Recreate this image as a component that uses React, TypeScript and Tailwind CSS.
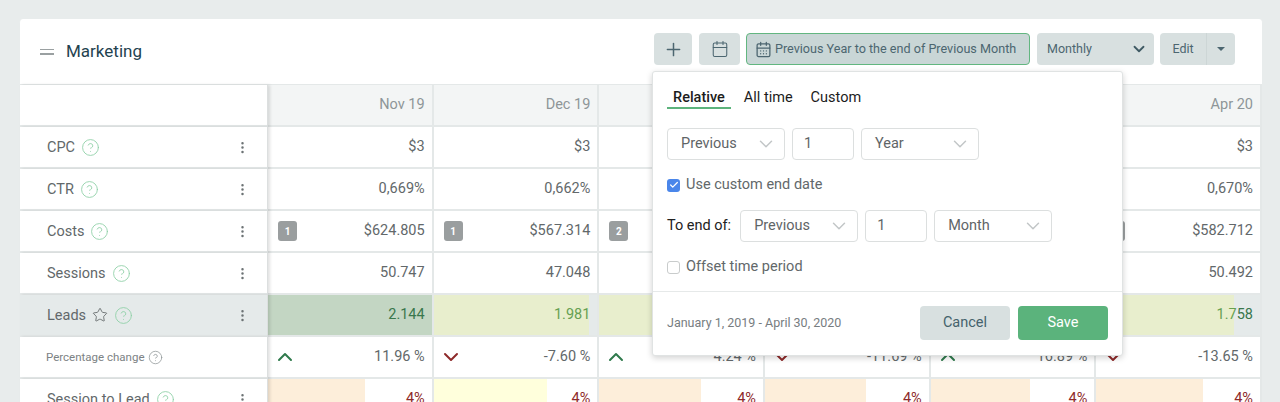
import { Calendar, CalendarDays, Check, ChevronDown, ChevronUp, CircleHelp, EllipsisVertical, Plus, Star } from "lucide-react";

type Row = {
  label: string;
  values: string[];
  badges?: string[];
};

// columns 3-5 sit under the popover, so their values stay empty
const months = ["Nov 19", "Dec 19", "", "", "", "Apr 20"];

const rows: Row[] = [
  { label: "CPC", values: ["$3", "$3", "", "", "", "$3"] },
  { label: "CTR", values: ["0,669%", "0,662%", "", "", "", "0,670%"] },
  {
    label: "Costs",
    values: ["$624.805", "$567.314", "", "", "", "$582.712"],
    badges: ["1", "1", "2", "", "", "1"],
  },
  { label: "Sessions", values: ["50.747", "47.048", "", "", "", "50.492"] },
];

const leads = [
  { bar: "w-full bg-[#c3d6c3]", light: "", dark: "2.144" },
  { bar: "w-[95%] bg-[#e8eecd]", light: "1.981", dark: "" },
  { bar: "w-full bg-[#e8eecd]", light: "", dark: "" },
  { bar: "w-full bg-[#e8eecd]", light: "", dark: "" },
  { bar: "w-full bg-[#e8eecd]", light: "", dark: "" },
  { bar: "w-[84%] bg-[#e8eecd]", light: "1.7", dark: "58" },
];

const changes = [
  { value: "11.96 %", up: true },
  { value: "-7.60 %", up: false },
  { value: "4.24 %", up: true },
  { value: "-11.69 %", up: false },
  { value: "16.89 %", up: true },
  { value: "-13.65 %", up: false },
];

const sessionToLead = [
  { bar: "w-[59%] bg-[#fdeeda]" },
  { bar: "w-[69%] bg-[#ffffdc]" },
  { bar: "w-[62%] bg-[#fdeeda]" },
  { bar: "w-[62%] bg-[#fdeeda]" },
  { bar: "w-[61%] bg-[#fdeeda]" },
  { bar: "w-[65%] bg-[#fdeeda]" },
];

const Help = () => <CircleHelp className="size-[19px] text-[#8ed0a6]" strokeWidth={1.1} />;

const RowLabel = ({ children }: { children: React.ReactNode }) => (
  <span className="pt-[2px] text-[14.5px] text-[#62686a]">{children}</span>
);

const LabelCell = ({ children, kebab = true, active = false }: { children: React.ReactNode; kebab?: boolean; active?: boolean }) => (
  <div
    className={`relative z-10 flex h-[42px] items-center gap-[6px] border-b-2 border-r border-[#e4e8e8] border-r-[#dcdfdf] pl-[27px] pr-[17px] shadow-[2px_0_3px_rgba(0,0,0,0.12)] ${
      active ? "bg-[#e5eaea]" : "bg-white"
    }`}
  >
    {children}
    {kebab && <EllipsisVertical className="ml-auto size-[15px] text-[#6c7274]" strokeWidth={2} />}
  </div>
);

const Cell = ({ children, className = "" }: { children: React.ReactNode; className?: string }) => (
  <div className={`relative flex h-[42px] items-center justify-between border-b-2 border-r-2 border-[#e4e8e8] pl-[10px] pr-[7px] text-[14.5px] text-[#62686a] ${className}`}>
    {children}
  </div>
);

const FakeSelect = ({ label, wide = true }: { label: string; wide?: boolean }) => (
  <div
    className={`flex h-[32px] items-center justify-between rounded-[4px] border border-[#dcdfdf] bg-white text-[14.5px] text-[#5f6567] ${
      wide ? "w-[118px] pl-[13px] pr-[7px]" : "w-[62px] pl-[11px]"
    }`}
  >
    {label}
    {wide && <ChevronDown className="size-[22px] text-[#c2c6c7]" strokeWidth={1.6} />}
  </div>
);

const DatePopover = () => (
  <div className="absolute left-[632px] top-[52px] z-20 flex h-[285px] w-[471px] flex-col rounded-[3px] border border-[#e0e3e3] bg-white shadow-[0_2px_6px_rgba(0,0,0,0.18)]">
    <div className="flex flex-col px-[14px] pt-[15px]">
      <div className="flex h-[22px] items-start gap-[13px] text-[14.5px] text-[#1c1c1c]">
        <div className="h-[22px] border-b-2 border-[#5cb37c] px-[6px] font-medium">Relative</div>
        <div>All time</div>
        <div className="ml-[5px]">Custom</div>
      </div>
      <div className="mt-[19px] flex gap-[7px]">
        <FakeSelect label="Previous" />
        <FakeSelect label="1" wide={false} />
        <FakeSelect label="Year" />
      </div>
      <div className="mt-[16px] flex h-[18px] items-center gap-[6px] text-[14.5px] text-[#62686a]">
        <span className="flex size-[13px] items-center justify-center rounded-[3px] bg-[#4a86ea]">
          <Check className="size-[10px] text-white" strokeWidth={3} />
        </span>
        Use custom end date
      </div>
      <div className="mt-[16px] flex items-center gap-[7px]">
        <span className="mr-[2px] text-[14.5px] text-[#222]">To end of:</span>
        <FakeSelect label="Previous" />
        <FakeSelect label="1" wide={false} />
        <FakeSelect label="Month" />
      </div>
      <div className="mt-[16px] flex h-[18px] items-center gap-[6px] text-[14.5px] text-[#62686a]">
        <span className="size-[13px] rounded-[3px] border border-[#c9cccc] bg-white" />
        Offset time period
      </div>
    </div>
    <div className="mt-[15px] flex flex-1 items-center justify-between border-t border-[#e6e9e9] pb-[2px] pl-[14px] pr-[14px]">
      <span className="mt-[2px] text-[12.5px] text-[#777d7f]">January 1, 2019 - April 30, 2020</span>
      <div className="flex gap-[8px] text-[14.5px]">
        <div className="flex h-[34px] w-[90px] items-center justify-center rounded-[4px] bg-[#d8e0e0] text-[#44626c]">Cancel</div>
        <div className="flex h-[34px] w-[90px] items-center justify-center rounded-[4px] bg-[#5bb37c] text-white">Save</div>
      </div>
    </div>
  </div>
);

export default function App() {
  return (
    <div className="h-[402px] overflow-hidden bg-[#e8ecec] pl-[19px] pr-[17px] pt-[19px] font-['Roboto',sans-serif]">
      <div className="relative rounded-t-[4px] border-x border-[#e8ecec] bg-white">
        <div className="flex h-[66px] items-center border-b border-[#e4e8e8] pl-[20px] pr-[27px]">
          <div className="flex w-[14px] flex-col gap-[3px]">
            <div className="h-[1.5px] bg-[#9aa0a1]" />
            <div className="h-[1.5px] bg-[#9aa0a1]" />
          </div>
          <h2 className="ml-[12px] text-[17px] text-[#1f4350]">Marketing</h2>
          <div className="ml-auto flex h-[32px] items-stretch gap-[6px] self-start mt-[14px] text-[12.5px] text-[#4c6670]">
            <div className="mr-[1px] flex w-[38px] items-center justify-center rounded-[4px] bg-[#d8e0e0]">
              <Plus className="size-[21px]" strokeWidth={1.7} />
            </div>
            <div className="flex w-[41px] items-center justify-center rounded-[4px] bg-[#d8e0e0]">
              <Calendar className="size-[18px]" strokeWidth={1.4} />
            </div>
            <div className="mr-[1px] flex w-[284px] items-center gap-[3px] rounded-[4px] border border-[#62b680] bg-[#c9d6d6] pl-[8px] text-[12.6px]">
              <CalendarDays className="size-[17px]" strokeWidth={1.8} />
              Previous Year to the end of Previous Month
            </div>
            <div className="flex w-[117px] items-center justify-between rounded-[4px] bg-[#d8e0e0] pl-[10px] pr-[6px]">
              Monthly
              <ChevronDown className="size-[18px] text-[#3f5a64]" strokeWidth={2.4} />
            </div>
            <div className="flex w-[75px] rounded-[4px] bg-[#d8e0e0]">
              <div className="flex w-[47px] items-center justify-center border-r border-[#cdd6d6]">Edit</div>
              <div className="flex flex-1 items-center justify-center">
                <span className="h-0 w-0 border-x-[4px] border-t-[4px] border-x-transparent border-t-[#4c6670]" />
              </div>
            </div>
          </div>
        </div>

        <div className="grid grid-cols-[248px_repeat(6,1fr)]">
          <LabelCell kebab={false}>{null}</LabelCell>
          {months.map((m, i) => (
            <Cell key={i} className="bg-[#f3f5f5] !text-[#8e9598]">
              <span />
              {m}
            </Cell>
          ))}

          {rows.map((row) => (
            <div key={row.label} className="contents">
              <LabelCell>
                <RowLabel>{row.label}</RowLabel>
                <Help />
              </LabelCell>
              {row.values.map((v, i) => (
                <Cell key={i}>
                  {row.badges?.[i] ? (
                    <span className="flex h-[20px] w-[19px] items-center justify-center rounded-[3px] bg-[#9a9e9f] text-[10px] font-bold text-white">
                      {row.badges[i]}
                    </span>
                  ) : (
                    <span />
                  )}
                  {v}
                </Cell>
              ))}
            </div>
          ))}

          <LabelCell active>
            <RowLabel>Leads</RowLabel>
            <Star className="size-[16px] text-[#62686a]" strokeWidth={1.3} />
            <Help />
          </LabelCell>
          {leads.map((l, i) => (
            <Cell key={i} className="bg-[#e5eaea]">
              <div className={`absolute inset-y-0 left-0 ${l.bar}`} />
              <span />
              <span className="relative">
                <span className="text-[#66a052]">{l.light}</span>
                <span className="text-[#39774c]">{l.dark}</span>
              </span>
            </Cell>
          ))}

          <LabelCell kebab={false}>
            <span className="-ml-[1px] pt-[2px] text-[11.5px] text-[#7c8284]">Percentage change</span>
            <CircleHelp className="size-[15px] -ml-[2px] mt-[1px] text-[#8f9597]" strokeWidth={1.2} />
          </LabelCell>
          {changes.map((c) => (
            <Cell key={c.value}>
              {c.up ? (
                <ChevronUp className="size-[24px] -ml-[5px] text-[#2f7a4c]" strokeWidth={2} />
              ) : (
                <ChevronDown className="size-[24px] -ml-[5px] text-[#8e2a2a]" strokeWidth={2} />
              )}
              {c.value}
            </Cell>
          ))}

          <LabelCell>
            <RowLabel>Session to Lead</RowLabel>
            <Help />
          </LabelCell>
          {sessionToLead.map((s, i) => (
            <Cell key={i}>
              <div className={`absolute inset-y-0 left-0 ${s.bar}`} />
              <span />
              <span className="relative text-[#8e2a2a]">4%</span>
            </Cell>
          ))}
        </div>

        <DatePopover />
      </div>
    </div>
  );
}
